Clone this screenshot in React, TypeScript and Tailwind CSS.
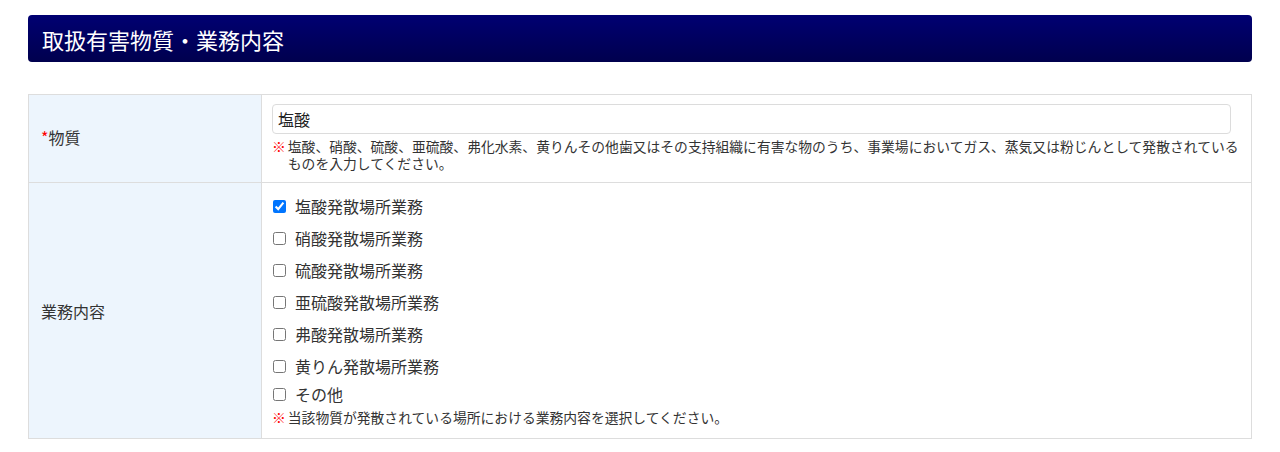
const items = [
    { label: "塩酸発散場所業務", checked: true },
    { label: "硝酸発散場所業務", checked: false },
    { label: "硫酸発散場所業務", checked: false },
    { label: "亜硫酸発散場所業務", checked: false },
    { label: "弗酸発散場所業務", checked: false },
    { label: "黄りん発散場所業務", checked: false },
]

function Note({ children }: { children: React.ReactNode }) {
    return (
        <div className="flex text-[13.8px] leading-[17px] text-[#333]">
            <span className="text-[#ff0000] mr-[2px] shrink-0">※</span>
            <span>{children}</span>
        </div>
    )
}

export default function App() {
    return (
        <div
            className="w-[1280px] h-[452px] bg-white px-[28px] pt-[15px]"
            style={{ fontFamily: '"Noto Sans CJK JP", "Noto Sans", sans-serif' }}
        >
            <div className="h-[47px] rounded-[4px] bg-gradient-to-b from-[#000072] to-[#00004e] flex items-center px-[14px]">
                <h1 className="text-white text-[22px] leading-none">取扱有害物質・業務内容</h1>
            </div>

            <table className="mt-[32px] w-full border-collapse border border-[#dddddd] text-[#333]">
                <tbody>
                    <tr>
                        <th className="w-[233px] bg-[#edf5fd] border border-[#dddddd] text-left font-normal text-[16px] px-[12px] pb-[4px]">
                            <span className="text-[#ff0000]">*</span>物質
                        </th>
                        <td className="border border-[#dddddd] pl-[10px] pr-[20px] pt-[9px] pb-[10px]">
                            <input
                                type="text"
                                defaultValue="塩酸"
                                className="w-full h-[30px] border border-[#dcdcdc] rounded-[4px] px-[5px] text-[16px] text-[#222] outline-none"
                            />
                            <div className="mt-[4px] -mr-[10px]">
                                <Note>
                                    塩酸、硝酸、硫酸、亜硫酸、弗化水素、黄りんその他歯又はその支持組織に有害な物のうち、事業場においてガス、蒸気又は粉じんとして発散されているものを入力してください。
                                </Note>
                            </div>
                        </td>
                    </tr>
                    <tr>
                        <th className="bg-[#edf5fd] border border-[#dddddd] text-left font-normal text-[16px] px-[12px]">
                            業務内容
                        </th>
                        <td className="border border-[#dddddd] pl-[10px] pr-[20px] pt-[7px] pb-[12px]">
                            <div className="flex flex-col">
                                {items.map((item) => (
                                    <label key={item.label} className="h-8 flex items-center gap-[9px] text-[16px]">
                                        <input
                                            type="checkbox"
                                            defaultChecked={item.checked}
                                            className="w-[13px] h-[13px] ml-px accent-[#0075ff]"
                                        />
                                        {item.label}
                                    </label>
                                ))}
                                <label className="h-6 flex items-center gap-[9px] text-[16px]">
                                    <input type="checkbox" className="w-[13px] h-[13px] ml-px" />
                                    その他
                                </label>
                            </div>
                            <div className="mt-[3px]">
                                <Note>当該物質が発散されている場所における業務内容を選択してください。</Note>
                            </div>
                        </td>
                    </tr>
                </tbody>
            </table>
        </div>
    )
}
